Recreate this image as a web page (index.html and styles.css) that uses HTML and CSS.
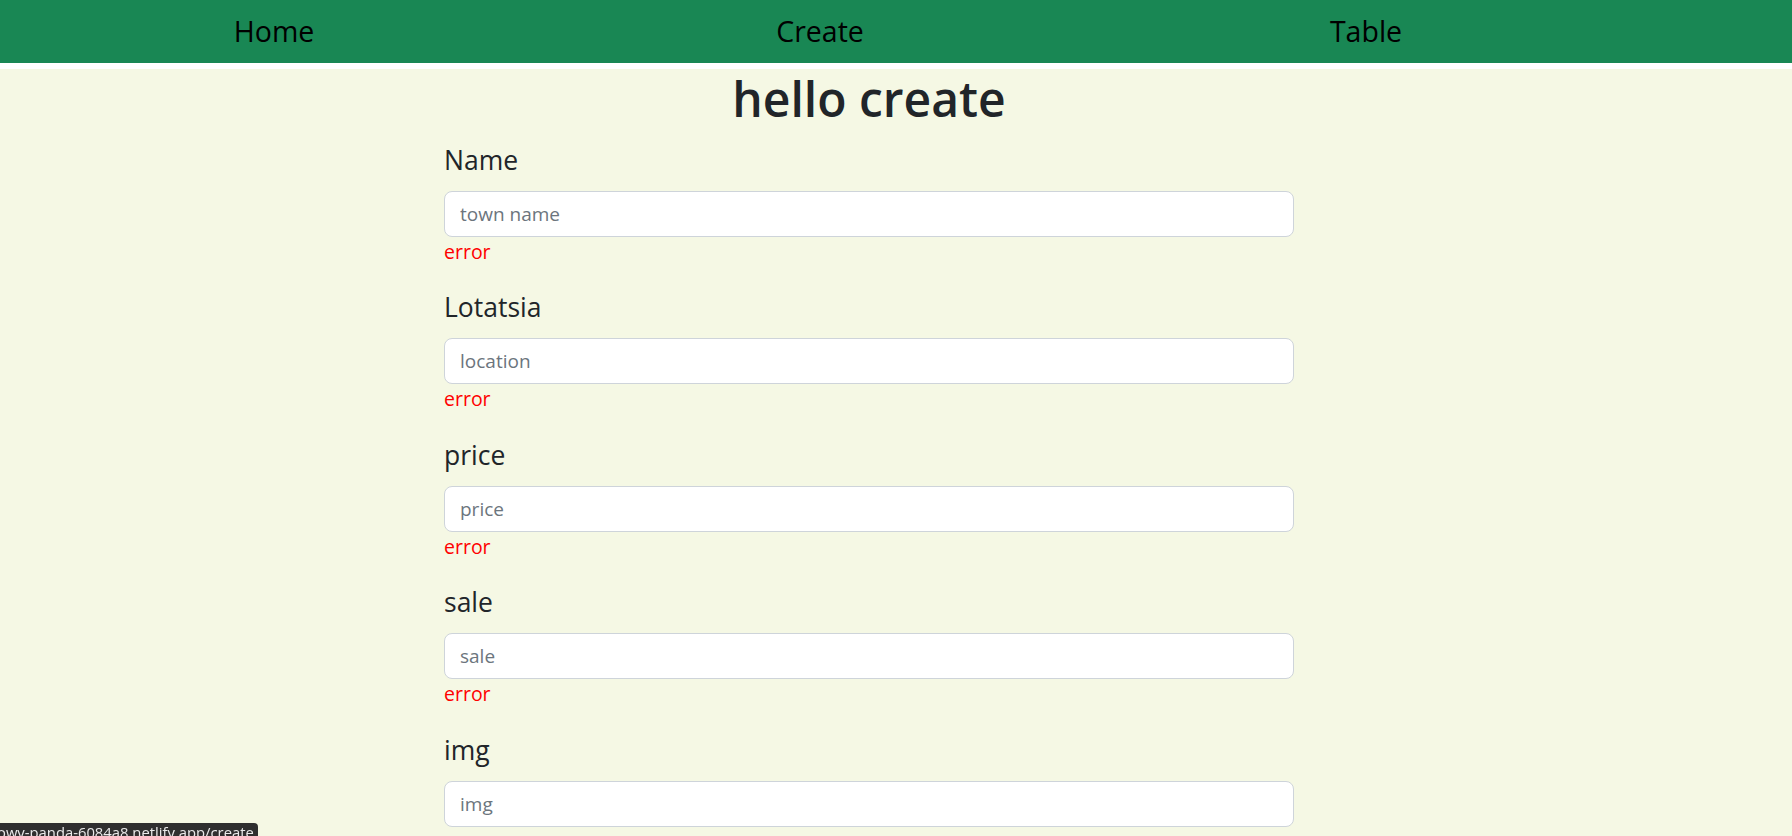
FILE: index.html
```html
<!DOCTYPE html>
<html lang="en">
<head>
<meta charset="utf-8">
<title>Create</title>
<link rel="stylesheet" href="styles.css">
</head>
<body>
<header class="topbar">
  <nav class="nav">
    <a class="nav-link" href="#">Home</a>
    <a class="nav-link" href="#">Create</a>
    <a class="nav-link" href="#">Table</a>
  </nav>
</header>
<main class="page">
  <section class="column">
    <h1 class="title">hello create</h1>
    <form class="form">
      <div class="group">
        <label class="label" for="name">Name</label>
        <input class="input" id="name" type="text" placeholder="town name">
        <div class="error">error</div>
      </div>
      <div class="group">
        <label class="label" for="loc">Lotatsia</label>
        <input class="input" id="loc" type="text" placeholder="location">
        <div class="error">error</div>
      </div>
      <div class="group">
        <label class="label" for="price">price</label>
        <input class="input" id="price" type="text" placeholder="price">
        <div class="error">error</div>
      </div>
      <div class="group">
        <label class="label" for="sale">sale</label>
        <input class="input" id="sale" type="text" placeholder="sale">
        <div class="error">error</div>
      </div>
      <div class="group">
        <label class="label" for="img">img</label>
        <input class="input" id="img" type="text" placeholder="img">
        <div class="error">error</div>
      </div>
    </form>
  </section>
</main>
<div class="status">owy-panda-6084a8.netlify.app/create</div>
</body>
</html>
```
FILE: styles.css
```css
html, body {
  margin: 0;
  padding: 0;
}
body {
  background: #f5f8e4;
  font-family: "Open Sans", "Noto Sans", sans-serif;
  color: #212529;
  height: 836px;
  overflow: hidden;
}
.topbar {
  background: #198754;
  border-bottom: 6px solid #ffffff;
}
.nav {
  display: grid;
  grid-template-columns: repeat(3, 546px);
  padding-left: 1px;
  height: 63px;
  align-items: center;
}
.nav-link {
  justify-self: center;
  color: #000;
  text-decoration: none;
  font-size: 28.5px;
  line-height: 34px;
  padding-bottom: 2px;
}
.page {
  display: grid;
  grid-template-columns: 444px 850px 1fr;
}
.column {
  grid-column: 2;
}
.title {
  margin: 0 0 16px;
  text-align: center;
  font-size: 48px;
  font-weight: 600;
  line-height: 56px;
  padding-top: 2px;
}
.form {
  display: flex;
  flex-direction: column;
}
.group {
  display: flex;
  flex-direction: column;
  padding-bottom: 23.4px;
}
.label {
  font-size: 26.5px;
  line-height: 34px;
  margin-bottom: 14px;
}
.input {
  box-sizing: border-box;
  height: 46px;
  border: 1px solid #ced4da;
  border-radius: 8px;
  background: #fff;
  padding: 0 15px;
  font-family: inherit;
  font-size: 19px;
  color: #212529;
  outline: none;
}
.input::placeholder {
  color: #6c757d;
}
.error {
  color: #ff0000;
  font-size: 19.5px;
  line-height: 30px;
}
.status {
  position: fixed;
  left: 0;
  bottom: 0;
  height: 13px;
  width: 258px;
  background: #2f2f2f;
  color: #eaeaea;
  border-top-right-radius: 4px;
  font-size: 14.8px;
  line-height: 19px;
  white-space: nowrap;
  overflow: hidden;
  text-indent: -3px;
}
```
